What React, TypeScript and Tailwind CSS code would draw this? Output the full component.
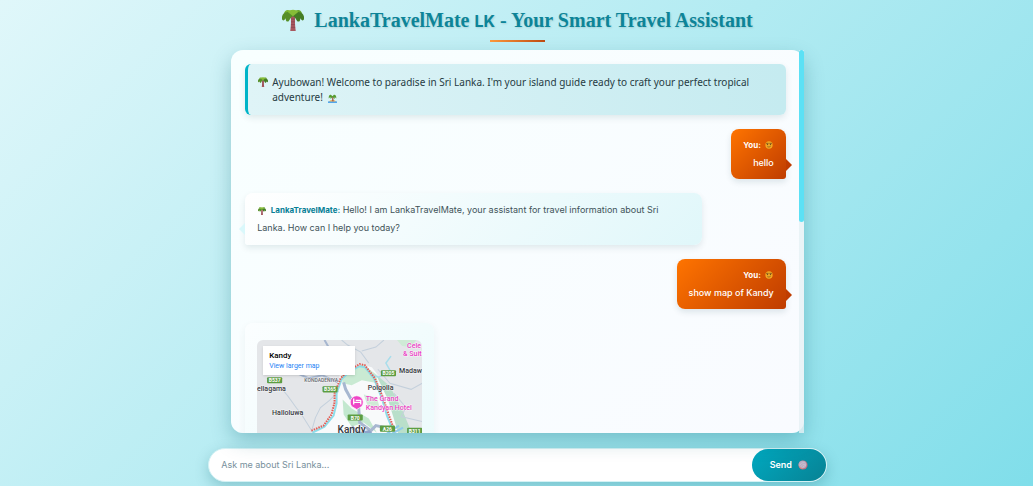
import type { ReactNode } from 'react';

const FONT = "font-['Inter','Noto_Sans',sans-serif]";

function Palm({ className }: { className: string }) {
  return (
    <svg viewBox="0 0 24 24" className={className} aria-hidden="true">
      <path d="M9.500 7.500 L14.500 7.500 C14 12 14 18 15 24 L9 24 C10 18 10 12 9.500 7.500Z" fill="#a8585f" />
      <path d="M10 11h3.8M9.9 14h4M9.8 17h4.3M9.7 20h4.7" stroke="#87434f" strokeWidth="0.8" />
      <path d="M12 6 C9 -1 3 0 2 5 C5 3 9 4 12 8Z" fill="#79b530" />
      <path d="M12 6 C15 -1 21 0 22 5 C19 3 15 4 12 8Z" fill="#69a52c" />
      <path d="M12 5 C5 1 -1 5 0 11 C1 14 3 12 4 10 C4 13 5 14 7 13.500 C9 12 9 9 12 8Z" fill="#568f28" />
      <path d="M12 5 C19 1 25 5 24 11 C23 14 21 12 20 10 C20 13 19 14 17 13.500 C15 12 15 9 12 8Z" fill="#447d25" />
      <path d="M6 3 C9 0 15 0 18 3 L12 8Z" fill="#86bd37" />
    </svg>
  );
}

function Island({ className }: { className: string }) {
  return (
    <svg viewBox="0 0 24 24" className={className} aria-hidden="true">
      <path d="M0 20 C5 17 19 17 24 20 V24 H0Z" fill="#53a7ed" />
      <path d="M3 20 C7 15 17 15 21 20Z" fill="#efb75f" />
      <path d="M11 7h3l1 12h-4Z" fill="#a5564a" />
      <path d="M12 6 C7 -2 1 2 2 12 L6 8 L7 13 L12 8 L18 13 L18 8 L22 12 C23 2 16 -2 12 6Z" fill="#579b30" />
    </svg>
  );
}

function Face({ className }: { className: string }) {
  return (
    <svg viewBox="0 0 24 24" className={className} aria-hidden="true">
      <circle cx="12" cy="12" r="11" fill="#f3a823" />
      <path d="M3 7h8M13 7h8" stroke="#7c5a20" strokeWidth="2.500" />
      <circle cx="7.500" cy="10.500" r="2" fill="#76501e" />
      <circle cx="16.500" cy="10.500" r="2" fill="#76501e" />
      <path d="M7 17q5 3 10-1" stroke="#76501e" strokeWidth="2" fill="none" />
    </svg>
  );
}

function Shell({ className }: { className: string }) {
  return (
    <svg viewBox="0 0 24 24" className={className} aria-hidden="true">
      <circle cx="12" cy="12" r="11" fill="#c06b7c" />
      <circle cx="11" cy="11" r="9.500" fill="#b8adc3" />
      <path d="M4 13q3-8 12-7M6 17q4-8 13-7M11 19q2-6 8-6" stroke="#d6c5d2" strokeWidth="1.500" fill="none" />
      <path d="M3 14q2 7 9 7" stroke="#dc8e83" strokeWidth="2" fill="none" />
    </svg>
  );
}

function RoadBadge({ x, y, children }: { x: number; y: number; children: string }) {
  return (
    <g>
      <rect x={x} y={y} width="15" height="6" rx="1" fill="#5c9d42" />
      <text x={x + 7.5} y={y + 5} textAnchor="middle" fontSize="5" fontWeight="700" fill="#fff">
        {children}
      </text>
    </g>
  );
}

function KandyMap() {
  return (
    <div className="relative overflow-hidden rounded-md">
      <svg
        viewBox="0 0 164 150"
        className="block w-full font-['Roboto',sans-serif]"
        role="img"
        aria-label="Map of Kandy"
      >
        <rect width="164" height="150" fill="#e4e6e9" />
        <path d="M82 35 L102 24 L114 27 L124 40 L133 62 L142 84 L160 100 L164 150 H40 L56 91 L69 83 L78 65Z" fill="#f8fafb" />
        <path d="M84 35 L105 24 L118 34 L120 43 L104 40 L94 45 L85 43Z" fill="#c9ead3" />
        <path d="M118 34 L132 46 L144 69 L152 88 L164 96 V110 H145 L137 82 L130 59Z" fill="#b9dfca" />
        <path d="M85 59 L94 68 L111 78 L119 92 L106 82 L94 86 L86 74Z" fill="#c3e8cf" />
        <path d="M106 54 L119 57 L122 68 L110 66Z M139 0 h19 l-5 7 -9-1Z" fill="#cfead6" />
        <g fill="none" stroke="#c4d0dc" strokeWidth="1">
          <path d="M26 50 C35 60 36 65 43 72 L55 91" />
          <path d="M81 51 L72 60 L63 67 L58 77 L54 91" />
          <path d="M111 23 L103 12 L90 5 L84 0 M120 29 L132 43 L153 49 L164 43" />
          <path d="M136 53 L148 67 L143 76 L164 81" />
          <path d="M104 11 L118 7 L126 0" />
        </g>
        <path d="M67 0 L71 7 L78 12 M40 33 L51 38 L65 35 L80 42" fill="none" stroke="#a7b7d0" strokeWidth="2" />
        <path d="M86 42 L88 49 L93 58 L101 68 L102 82 L113 90 L118 85 L132 88" fill="none" stroke="#a7b7d0" strokeWidth="3" />
        <path d="M94 86 L101 93 L111 91 L116 96" fill="none" stroke="#8ea4ca" strokeWidth="3" />
        <path d="M133 16 L128 23 L132 30 L124 35 L121 37 L112 34" fill="none" stroke="#a8ddeb" strokeWidth="1.500" />
        <path d="M55 92 L67 86 L76 75 L79 63 L79 53 L84 39 L92 31 L102 26 L107 27 L116 38 L124 58 L129 75 L135 90" fill="none" stroke="#8dddea" strokeWidth="2" />
        <path d="M54 90 L66 85 L74 74 L77 62 L77 53 L83 38 L91 30 L102 24 L107 25 L117 38 L125 57 L131 75 L137 91" fill="none" stroke="#e35d56" strokeWidth="2" strokeDasharray="1.500 1" />
        <path d="M129 93 L141 85 M134 93 L145 87" stroke="#8fcbea" strokeWidth="2" />
        <RoadBadge x={10} y={37}>B537</RoadBadge>
        <RoadBadge x={65} y={46}>B365</RoadBadge>
        <RoadBadge x={123} y={30}>B205</RoadBadge>
        <RoadBadge x={90} y={74}>B70</RoadBadge>
        <RoadBadge x={122} y={85}>A26</RoadBadge>
        <RoadBadge x={149} y={87}>B311</RoadBadge>
        <g fontSize="7" fontWeight="500" fill="#36393d" stroke="#fff" strokeWidth="1" paintOrder="stroke" strokeOpacity="0.6">
          <text x="0" y="51">ellagama</text>
          <text x="15" y="74">Halloluwa</text>
          <text x="110" y="50">Polgolla</text>
          <text x="141" y="33">Madaw</text>
          <text x="47" y="42" fontSize="5" fill="#64686e">KONDADENIYA</text>
          <text x="80" y="92" fontSize="10">Kandy</text>
        </g>
        <g fontSize="7" fontWeight="500" fill="#ea42c4" stroke="#fff" strokeWidth="1" paintOrder="stroke" strokeOpacity="0.7">
          <text x="149" y="8">Cele</text>
          <text x="145" y="16">&amp; Suit</text>
          <text x="108" y="61">The Grand</text>
          <text x="108" y="69">Kandyan Hotel</text>
        </g>
        <path d="M99 69 L94 66 A6.500 6.500 0 1 1 104 66Z" fill="#ee45c6" stroke="#fff" strokeWidth="0.7" />
        <path d="M96 58v6M96 62h7v2M98 60h5v2" fill="none" stroke="#fff" strokeWidth="1.300" />
      </svg>
      <div className="absolute left-1.5 top-1.5 h-[29px] w-[92px] bg-white px-1.5 pt-[5px] font-['Roboto',sans-serif] shadow-sm">
        <p className="text-[8px] font-medium leading-[10px] text-black">Kandy</p>
        <a href="#map" className="block text-[7px] leading-[10px] text-[#2583f5]">View larger map</a>
      </div>
    </div>
  );
}

function UserMessage({ children }: { children: ReactNode }) {
  return (
    <div className="relative self-end rounded-lg rounded-br-[3px] bg-linear-135 from-[#ff7400] to-[#bf3c00] px-3 py-[7px] text-right text-[9px] font-medium text-white shadow-[0_3px_6px_rgba(0,60,70,0.12)]">
      <div className="absolute -right-1.5 top-[30px] size-0 border-y-[6px] border-l-[6px] border-y-transparent border-l-[#bf3c00]" />
      <p className="flex items-center justify-end gap-1 text-[8px] font-bold leading-[18px]">
        You: <Face className="mr-px size-2" />
      </p>
      <p className="leading-[18px]">{children}</p>
    </div>
  );
}

export default function App() {
  return (
    <div className={`flex h-screen flex-col items-center bg-linear-135 from-[#e0f7fa] via-[#b2ebf2] to-[#80deea] pb-1 pl-0.5 ${FONT}`}>
      <header className="flex flex-col items-center">
        <h1 className="flex h-10 items-center gap-2.5 whitespace-nowrap font-['Liberation_Serif',serif] text-xl font-bold text-[#0d8498] [text-shadow:1px_1px_2px_rgba(0,0,0,0.12)]">
          <Palm className="size-[22px]" />
          <span>
            LankaTravelMate <span className="font-['Inter',sans-serif] text-base font-bold">LK</span> - Your Smart Travel Assistant
          </span>
        </h1>
        <div className="h-0.5 w-[55px] bg-linear-to-r from-[#ff9a3c] to-[#bf4a10]" />
      </header>

      <main className="flex min-h-0 w-3/5 flex-1 flex-col gap-[15px] pt-2">
        <section className="relative mx-[23px] flex min-h-0 flex-1 rounded-xl shadow-[0_8px_20px_rgba(0,90,105,0.28)]" aria-label="Conversation">
          <div className="flex flex-1 flex-col gap-3.5 overflow-y-auto rounded-xl bg-linear-135 from-[#f8ffff] to-[#f9fbff] py-3.5 pl-3.5 pr-[18px] [scrollbar-width:none]">
            <div className="flex shrink-0 gap-1 rounded-md border-l-[3px] border-[#00b4c8] bg-linear-to-r from-[#dff4f7] to-[#c5ebf0] pb-2.5 pl-2.5 pr-3 pt-[11px] font-['Noto_Sans',sans-serif] text-[10px] leading-[15px] text-[#263b43] shadow-[0_3px_6px_rgba(0,60,70,0.1)]">
              <Palm className="mt-0.5 size-2.5 shrink-0" />
              <p>
                Ayubowan! Welcome to paradise in Sri Lanka. I'm your island guide ready to craft your perfect tropical adventure!{' '}
                <Island className="ml-0.5 inline size-[9px]" />
              </p>
            </div>

            <UserMessage>hello</UserMessage>

            <div className="relative w-[84.500%] shrink-0 rounded-lg rounded-bl-[3px] bg-linear-135 from-white to-[#e0f7fa] py-2 pl-3 pr-5 text-[9px] leading-[18px] text-[#3f5359] shadow-[0_3px_6px_rgba(0,60,70,0.1)]">
              <div className="absolute -left-1.5 top-[30px] size-0 border-y-[6px] border-r-[6px] border-y-transparent border-r-[#daf8fb]" />
              <p>
                <Palm className="ml-px mr-0.5 inline size-2" />{' '}
                <strong className="text-[8px] font-bold text-[#087f96]">LankaTravelMate:</strong> Hello! I am LankaTravelMate, your assistant for travel information about Sri Lanka. How can I help you today?
              </p>
            </div>

            <UserMessage>show map of Kandy</UserMessage>

            <div className="w-[35%] shrink-0 rounded-lg bg-linear-135 from-[#fbfeff] to-[#e9fafb] px-3 pb-3 pt-[17px] shadow-[0_3px_8px_rgba(0,60,70,0.06)]">
              <KandyMap />
            </div>
          </div>
          <div className="absolute inset-y-0 right-0 w-[5px] bg-[#e6f1f5]/80" aria-hidden="true">
            <div className="h-[45%] rounded-full bg-[#5ce1f5]" />
          </div>
        </section>

        <form className="flex h-[34px] rounded-full border border-[#d4f2f5] bg-white shadow-[0_5px_14px_rgba(0,90,105,0.25)]" onSubmit={(e) => e.preventDefault()}>
          <input
            type="text"
            aria-label="Message"
            placeholder="Ask me about Sri Lanka..."
            className="min-w-0 flex-1 rounded-l-full bg-transparent px-3 text-[9px] text-[#263b43] outline-none placeholder:text-[#78909c]"
          />
          <button type="submit" className="flex w-[74px] items-center justify-center gap-1.5 rounded-full bg-linear-135 from-[#00a9c0] to-[#078294] text-[9px] font-semibold text-white">
            Send <Shell className="size-2.5" />
          </button>
        </form>
      </main>
    </div>
  );
}
